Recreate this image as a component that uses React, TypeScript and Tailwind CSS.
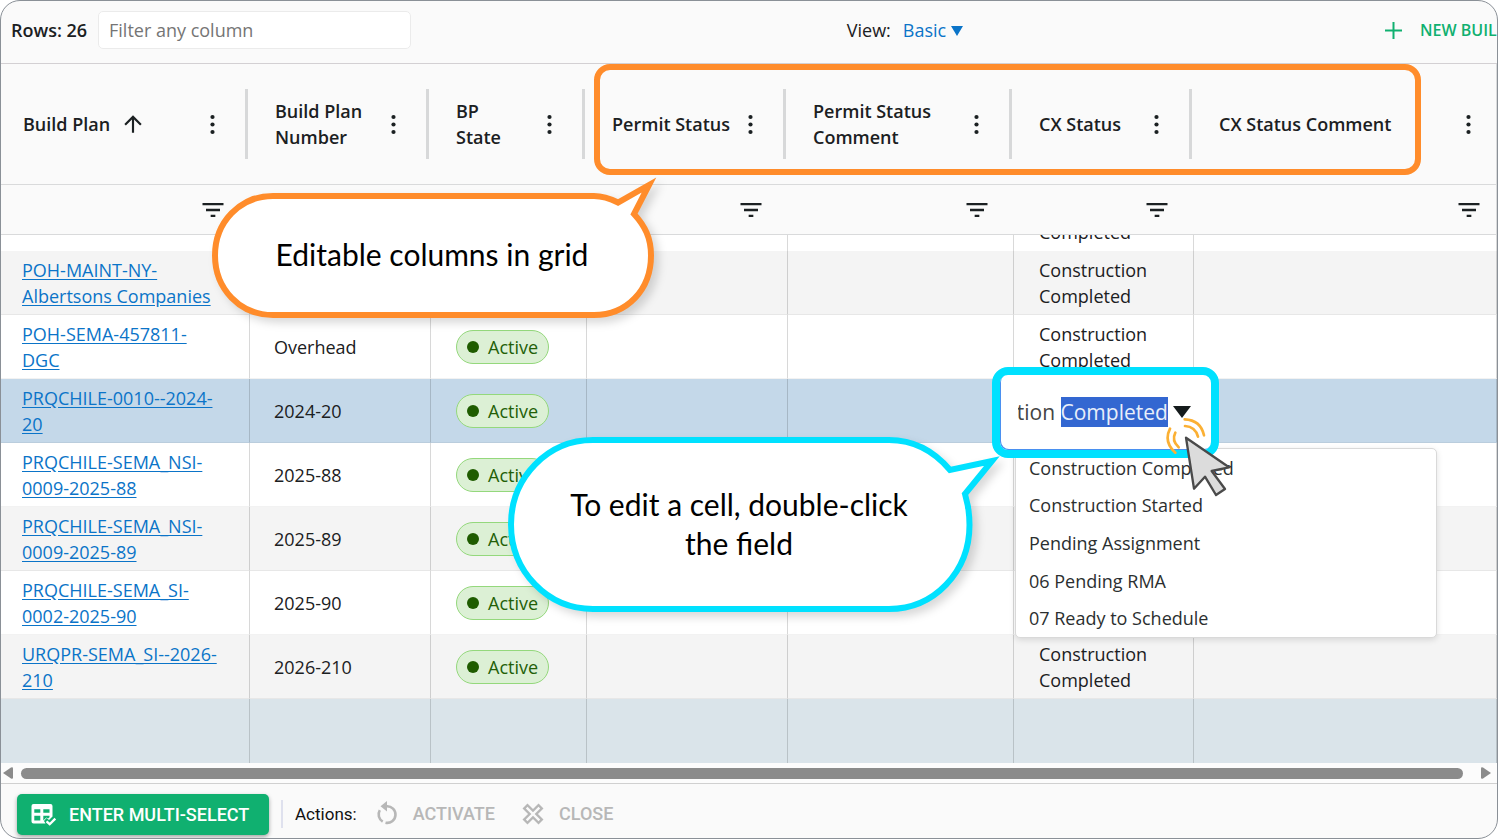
import * as React from "react"
import { MdArrowUpward, MdFilterList } from "react-icons/md"
import clsx from "clsx"

interface Column {
  id: string
  label: string
  width: string
  sorted?: boolean
}

interface BuildPlan {
  name: string
  number: string
  tone: string
}

const columns: Column[] = [
  { id: "plan", label: "Build Plan", width: "w-[249px]", sorted: true },
  { id: "number", label: "Build Plan\nNumber", width: "w-[181px]" },
  { id: "state", label: "BP\nState", width: "w-[156px]" },
  { id: "permit", label: "Permit Status", width: "w-[201px]" },
  { id: "permit-comment", label: "Permit Status\nComment", width: "w-[226px]" },
  { id: "cx", label: "CX Status", width: "w-[180px]" },
  { id: "cx-comment", label: "CX Status Comment", width: "w-auto" },
]

const plans: BuildPlan[] = [
  { name: "POH-MAINT-NY-\nAlbertsons Companies", number: "Overhead", tone: "bg-[#f4f4f4]" },
  { name: "POH-SEMA-457811-\nDGC", number: "Overhead", tone: "bg-white" },
  { name: "PRQCHILE-0010--2024-\n20", number: "2024-20", tone: "bg-[#c4d8e9]" },
  { name: "PRQCHILE-SEMA_NSI-\n0009-2025-88", number: "2025-88", tone: "bg-white" },
  { name: "PRQCHILE-SEMA_NSI-\n0009-2025-89", number: "2025-89", tone: "bg-[#f4f4f4]" },
  { name: "PRQCHILE-SEMA_SI-\n0002-2025-90", number: "2025-90", tone: "bg-white" },
  { name: "URQPR-SEMA_SI--2026-\n210", number: "2026-210", tone: "bg-[#f4f4f4]" },
]

const statusOptions = [
  "Construction Completed",
  "Construction Started",
  "Pending Assignment",
  "06 Pending RMA",
  "07 Ready to Schedule",
]

const cellBorder = "border-r border-r-black/15"

function DotsIcon() {
  return (
    <svg viewBox="0 0 24 24" className="size-6" fill="currentColor" aria-hidden="true">
      <circle cx="12.500" cy="5" r="2.1" />
      <circle cx="12.500" cy="12.500" r="2.1" />
      <circle cx="12.500" cy="20" r="2.1" />
    </svg>
  )
}

function TableCheckIcon() {
  return (
    <svg viewBox="0 0 28 28" className="size-7" aria-hidden="true">
      <path
        fill="currentColor"
        fillRule="evenodd"
        d="M4.500 3h17a2 2 0 0 1 2 2v10.500L20 19l-2.500-2-2.500 3 1.500 2.500H4.500a2 2 0 0 1-2-2V5a2 2 0 0 1 2-2zM5.300 8.300v3.500h6V8.300zM14.300 8.300v3.500h6.200V8.300zM5.300 14.800v4.600h6v-4.600zM14.300 14.800v4.600l1-1 2-1.800 1.800 1 1.400-1.400v-1.400z"
      />
      <path d="M17.500 20.300 20.700 23.200 26.300 17.600" fill="none" stroke="currentColor" strokeWidth="2.300" />
    </svg>
  )
}

function ActivateIcon() {
  return (
    <svg viewBox="0 0 28 28" className="size-7" aria-hidden="true">
      <g fill="none" stroke="currentColor" strokeWidth="2.600">
        <path d="M13.500 6.300A8.300 8.300 0 1 1 12.500 22.700" />
        <path d="M6.800 10.200A8.300 8.300 0 0 0 9.700 21.600" />
      </g>
      <path d="M14 1v10.500L7.500 6.300z" fill="currentColor" />
    </svg>
  )
}

function CloseOutlineIcon() {
  return (
    <svg viewBox="0 0 24 24" className="size-7" fill="currentColor" aria-hidden="true">
      <path d="M3 16.74 7.76 12 3 7.26 7.26 3 12 7.76 16.74 3 21 7.26 16.24 12 21 16.74 16.74 21 12 16.24 7.26 21 3 16.74M12 13.41l4.74 4.75 1.42-1.42L13.41 12l4.75-4.74-1.42-1.42L12 10.59 7.26 5.84 5.84 7.26 10.59 12l-4.75 4.74 1.42 1.42L12 13.41z" />
    </svg>
  )
}

function Toolbar() {
  return (
    <header className="flex h-[63px] shrink-0 items-center border-b border-[#d3d0d3] pb-1 pl-[10px]">
      <label htmlFor="grid-filter" className="w-[87px] font-semibold">
        Rows: 26
      </label>
      <input
        id="grid-filter"
        type="text"
        placeholder="Filter any column"
        className="h-[38px] w-[313px] rounded-[5px] border border-[#ebebeb] bg-white px-[10px] placeholder:text-[#757575]"
      />
      <div className="flex flex-1 items-center justify-center gap-3 pl-[14px]">
        <span>View:</span>
        <button type="button" className="flex items-center gap-[5px] text-[#0b74c8]">
          Basic
          <svg viewBox="0 0 12 12" className="size-3" fill="currentColor" aria-hidden="true">
            <path d="M0 2h12L6 12z" />
          </svg>
        </button>
      </div>
      <button
        type="button"
        className="flex w-[112px] items-center gap-[18px] overflow-hidden text-base font-semibold whitespace-nowrap text-[#10b070]"
      >
        <svg viewBox="0 0 17 17" className="size-[17px] shrink-0" fill="currentColor" aria-hidden="true">
          <path d="M7.500 0h2v7.500H17v2H9.500V17h-2V9.500H0v-2h7.500z" />
        </svg>
        NEW BUILD
      </button>
    </header>
  )
}

function StateBadge() {
  return (
    <span className="inline-flex h-[34px] w-[93px] items-center gap-[9px] rounded-full border border-[#94d87c] bg-[#dcf0d5] pl-[10px] text-[#235f08]">
      <span className="size-3 rounded-full bg-[#1f5c00]" />
      Active
    </span>
  )
}

function BuildPlanGrid() {
  return (
    <table className="w-full table-fixed border-separate border-spacing-0 text-left">
      <thead className="bg-[#fafafa]">
        <tr>
          {columns.map((column) => (
            <th
              key={column.id}
              scope="col"
              className={clsx("h-[121px] border-b border-[#d9dadb] p-0 font-semibold last:border-r", column.width)}
            >
              <div className={clsx("flex items-center", column.sorted ? "pl-[22px]" : "pl-[25px]")}>
                <span className="whitespace-pre-line">{column.label}</span>
                {column.sorted && <MdArrowUpward className="ml-[10px] size-[26px]" />}
                <button
                  type="button"
                  aria-label={`${column.id} column menu`}
                  className={clsx("ml-auto", column.id === "cx-comment" ? "mr-4" : "mr-[21px]")}
                >
                  <DotsIcon />
                </button>
                {column.id !== "cx-comment" && <span className="mr-[2px] h-[70px] w-[3px] bg-[#d7d8d9]" />}
              </div>
            </th>
          ))}
        </tr>
        <tr>
          {columns.map((column) => (
            <td key={column.id} className="h-[50px] border-b border-[#d9dadb] p-0 last:border-r">
              <button
                type="button"
                aria-label={`Filter ${column.id}`}
                className={clsx(
                  "ml-auto block size-7",
                  column.id === "cx-comment" ? "mr-[13px]" : "mr-[23px]"
                )}
              >
                <MdFilterList className="size-7" />
              </button>
            </td>
          ))}
        </tr>
      </thead>
      <tbody>
        {/* Row scrolled under the header, only its bottom edge shows */}
        <tr>
          {columns.map((column) => (
            <td key={column.id} className={clsx("bg-white p-0", cellBorder)}>
              <div className="flex h-4 items-end overflow-hidden pb-[6px] pl-[25px]">
                {column.id === "cx" && "Completed"}
              </div>
            </td>
          ))}
        </tr>
        {plans.map((plan) => (
          <tr key={plan.name} className={plan.tone}>
            <td className={clsx("h-16 border-b border-b-black/5 p-0 pl-[21px]", cellBorder)}>
              <a href="#" className="whitespace-pre-line text-[#0b74c8] underline underline-offset-2">
                {plan.name}
              </a>
            </td>
            <td className={clsx("border-b border-b-black/5 p-0 pl-6", cellBorder)}>{plan.number}</td>
            <td className={clsx("border-b border-b-black/5 p-0 pl-[25px]", cellBorder)}>
              <div className="flex">
                <StateBadge />
              </div>
            </td>
            <td className={clsx("border-b border-b-black/5", cellBorder)} />
            <td className={clsx("border-b border-b-black/5", cellBorder)} />
            <td className={clsx("border-b border-b-black/5 p-0 pl-[25px] whitespace-pre-line", cellBorder)}>
              {"Construction\nCompleted"}
            </td>
            <td className={clsx("border-b border-b-black/5", cellBorder)} />
          </tr>
        ))}
        <tr className="bg-[#dae4ea]">
          {columns.map((column) => (
            <td key={column.id} className={clsx("h-16", cellBorder)} />
          ))}
        </tr>
      </tbody>
    </table>
  )
}

function HorizontalScrollbar() {
  return (
    <div className="flex h-[21px] shrink-0 items-center gap-2 border-b border-[#d0d0d0] bg-[#fcfcfc] pr-[6px] pl-[2px] text-[#8b8b8b]">
      <svg viewBox="0 0 10 12" className="h-3 w-[10px]" fill="currentColor" aria-hidden="true">
        <path d="M0 6 8 .5Q10-.5 10 1.500v9Q10 12.500 8 11.500z" />
      </svg>
      <div className="mr-[10px] h-[11px] flex-1 rounded-full bg-[#8b8b8b]" />
      <svg viewBox="0 0 10 12" className="h-3 w-[10px]" fill="currentColor" aria-hidden="true">
        <path d="M10 6 2 .5Q0-.5 0 1.500v9Q0 12.500 2 11.500z" />
      </svg>
    </div>
  )
}

function ActionBar() {
  return (
    <footer className="flex flex-1 items-center pt-[6px] pl-4 font-['Roboto',sans-serif] text-[18px]">
      <button
        type="button"
        className="flex h-[41px] w-[252px] items-center gap-3 rounded-[5px] bg-[#10b070] pt-[2px] pl-3 font-medium text-white shadow-[0_2px_4px_rgba(0,0,0,0.35)]"
      >
        <TableCheckIcon />
        ENTER MULTI-SELECT
      </button>
      <span className="mx-3 h-7 w-[2px] bg-[#dfe1ee]" />
      <span className="text-[17px] text-[#111]">Actions:</span>
      <button type="button" disabled className="ml-4 flex items-center gap-3 font-medium text-[#b7b7b7]">
        <ActivateIcon />
        ACTIVATE
      </button>
      <button type="button" disabled className="ml-6 flex items-center gap-3 font-medium text-[#b7b7b7]">
        <CloseOutlineIcon />
        CLOSE
      </button>
    </footer>
  )
}

function StatusEditor() {
  const inputRef = React.useRef<HTMLInputElement>(null)

  // Open with the last word selected, scrolled to the end of the value
  React.useEffect(() => {
    const input = inputRef.current
    if (!input) return
    input.focus()
    input.setSelectionRange(13, 22)
    input.scrollLeft = input.scrollWidth
  }, [])

  return (
    <>
      <ul
        id="cx-status-options"
        role="listbox"
        aria-label="CX Status options"
        className="absolute top-[447px] left-[1014px] grid h-[190px] w-[422px] rounded-[5px] border border-[#d9d9d9] bg-white shadow-[0_2px_6px_rgba(0,0,0,0.12)]"
      >
        {statusOptions.map((option) => (
          <li key={option} role="option" aria-selected={option === statusOptions[0]} className="flex items-center pl-[13px] text-[#2b2f30]">
            {option}
          </li>
        ))}
      </ul>
      <div className="absolute top-[366px] left-[991px] flex h-[91px] w-[227px] items-center gap-[5px] rounded-2xl border-8 border-[#00e1ff] bg-white pb-[2px] pl-[18px] shadow-[inset_1px_-1px_0_#4a90f0]">
        <input
          ref={inputRef}
          type="text"
          role="combobox"
          aria-label="CX Status"
          aria-expanded="true"
          aria-controls="cx-status-options"
          defaultValue="Construction Completed"
          className="w-[150px] text-[21px] leading-[30px] text-[#444] outline-none selection:bg-[#3367d1] selection:text-[#e8effa]"
        />
        <svg viewBox="0 0 18 12" className="h-3 w-[18px]" fill="#151b1c" aria-hidden="true">
          <path d="M0 0h18L9 12z" />
        </svg>
      </div>
    </>
  )
}

function Annotations() {
  return (
    <>
      <div className="absolute top-[63px] left-[593px] h-[111px] w-[827px] rounded-2xl border-6 border-[#ff8c2b]" />

      <div className="absolute top-[171px] left-[205px] h-[156px] w-[460px]">
        <svg
          viewBox="206 172 460 156"
          className="absolute inset-0 size-full drop-shadow-[5px_5px_4px_rgba(0,0,0,0.15)]"
          aria-hidden="true"
        >
          <path
            d="M273 196H594C603 196 611 199 618 202.500L649 185 634 214C645 226 651 238 651 255.500C651 290 627 315 594 315H273C240 315 215 289 215 255.500S240 196 273 196z"
            fill="#fff"
            stroke="#ff8c2b"
            strokeWidth="6"
            strokeMiterlimit="10"
          />
        </svg>
        <p className="relative pt-[63px] pr-[8px] text-center font-['Lato',sans-serif] text-[30px] leading-[39px] text-black">
          Editable columns in grid
        </p>
      </div>

      <div className="absolute top-[429px] left-[499px] h-[196px] w-[510px]">
        <svg
          viewBox="500 430 510 196"
          className="absolute inset-0 size-full drop-shadow-[5px_5px_4px_rgba(0,0,0,0.15)]"
          aria-hidden="true"
        >
          <path
            d="M593 440H889C914 440 934 451 950 470L992 461 965 494C968 504 969.500 514 969.500 525C969.500 572 934 609 889 609H593C547 609 511 571 511 524.500S547 440 593 440z"
            fill="#fff"
            stroke="#00e1ff"
            strokeWidth="6"
            strokeMiterlimit="10"
          />
        </svg>
        <p className="relative pt-[55px] pr-[32px] text-center font-['Lato',sans-serif] text-[30px] leading-[39px] text-black">
          To edit a cell, double-click
          <br />
          the field
        </p>
      </div>
    </>
  )
}

function ClickPointer() {
  return (
    <svg viewBox="585 201 198 240" className="absolute top-[416px] left-[1164px] h-20 w-[66px]" fill="none" aria-hidden="true">
      <g stroke="#fbb034" strokeWidth="8" strokeLinecap="round">
        <path d="M644 208Q692 210 702 256" />
        <path d="M645 228Q676 230 684 260" />
        <path d="M600 236Q580 276 616 308" />
        <path d="M616 248Q604 272 626 292" />
      </g>
      <path
        d="M648 263 777 352 725 363 765 417 738 435 705 380 672 416z"
        fill="#dcdcdc"
        stroke="#4a4a4a"
        strokeWidth="7"
        strokeLinejoin="round"
      />
    </svg>
  )
}

export default function App() {
  return (
    <div className="relative flex min-h-screen flex-col overflow-hidden rounded-[20px] border border-[#8a9097] bg-[#fafafa] font-['Open_Sans','Noto_Sans',sans-serif] text-[18px] leading-[26px] text-[#1b2022]">
      <Toolbar />
      <BuildPlanGrid />
      <HorizontalScrollbar />
      <ActionBar />
      <Annotations />
      <StatusEditor />
      <ClickPointer />
    </div>
  )
}
